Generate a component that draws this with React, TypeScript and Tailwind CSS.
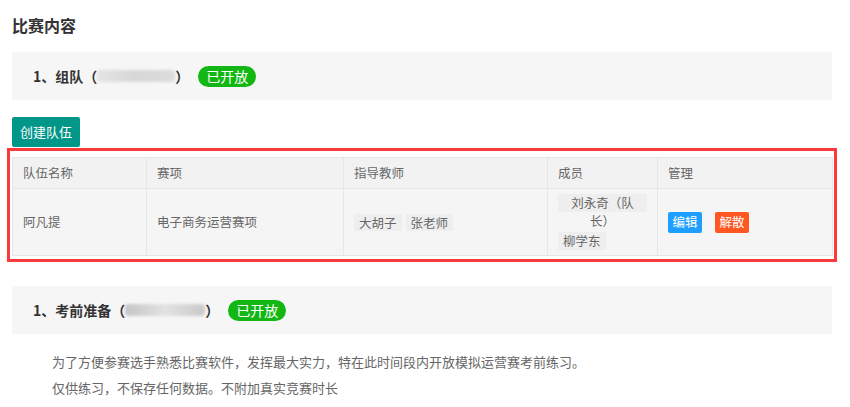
import type { ReactNode } from 'react';

const font = { fontFamily: '"Microsoft YaHei", "Noto Sans CJK SC", "Noto Sans", sans-serif' };

function Blurred({ width, dark }: { width: number; dark?: boolean }) {
  // the dates are blurred in the source screenshot
  return (
    <span
      aria-hidden
      className={
        dark
          ? 'inline-block h-[12px] rounded-sm bg-gradient-to-r from-[#c4c4c4] via-[#e2e2e2] to-[#c9c9c9] blur-[1.5px]'
          : 'inline-block h-[12px] rounded-sm bg-gradient-to-r from-[#e4e4e4] via-[#d7d7d7] to-[#dcdcdc] blur-[1.5px]'
      }
      style={{ width }}
    />
  );
}

function SectionBar({ label, blurWidth, dark }: { label: string; blurWidth: number; dark?: boolean }) {
  return (
    <div className="flex h-[48px] items-center bg-[#f6f6f6] pl-[21px] text-[14px] font-bold text-[#333]">
      <span>{label}（</span>
      <Blurred width={blurWidth} dark={dark} />
      <span>）</span>
      <span className="ml-[9px] flex h-[21px] items-center rounded-full bg-[#13b713] px-[8px] text-[14px] font-normal leading-none text-white">
        已开放
      </span>
    </div>
  );
}

function Tag({ children, className = '' }: { children: ReactNode; className?: string }) {
  return <span className={`inline-block bg-[#eeeeee] px-[5px] text-center ${className}`}>{children}</span>;
}

export default function App() {
  return (
    <div className="min-h-screen bg-white pl-3 pr-[18px] pt-[13px]" style={font}>
      <h2 className="text-[16px] font-bold leading-6 text-[#333]">比赛内容</h2>

      <div className="mt-[15px]">
        <SectionBar label="1、组队" blurWidth={78} />
      </div>

      <button className="mt-[17px] flex h-[30px] w-[68px] items-center justify-center rounded-[2px] bg-[#009688] text-[13px] text-white">
        创建队伍
      </button>

      <div className="relative mt-[10px]">
        {/* red annotation frame over the table */}
        <div className="pointer-events-none absolute -bottom-[6px] -left-[5px] -right-[5px] -top-[9px] border-[3px] border-[#fc3a3a]" />
        <table className="w-full table-fixed border-collapse text-[12.5px] text-[#666]">
          <colgroup>
            <col className="w-[134px]" />
            <col className="w-[197px]" />
            <col className="w-[204px]" />
            <col className="w-[110px]" />
            <col className="w-[175px]" />
          </colgroup>
          <thead>
            <tr className="h-[31px] bg-[#f2f2f2]">
              {['队伍名称', '赛项', '指导教师', '成员', '管理'].map((h) => (
                <th key={h} className="border border-[#e6e6e6] px-[10px] text-left font-normal">
                  {h}
                </th>
              ))}
            </tr>
          </thead>
          <tbody>
            <tr className="bg-[#f5f5f5]">
              <td className="border border-[#e6e6e6] px-[10px]">阿凡提</td>
              <td className="border border-[#e6e6e6] px-[10px]">电子商务运营赛项</td>
              <td className="border border-[#e6e6e6] px-[10px]">
                <div className="flex gap-[4px]">
                  <Tag className="h-[17px] leading-[17px]">大胡子</Tag>
                  <Tag className="h-[17px] leading-[17px]">张老师</Tag>
                </div>
              </td>
              <td className="border border-[#e6e6e6] px-[10px] py-[5px]">
                <div className="flex flex-col items-start">
                  <Tag className="mb-[20px] h-[18px] w-full leading-[18px]">刘永奇（队长）</Tag>
                  <Tag className="h-[18px] leading-[18px]">柳学东</Tag>
                </div>
              </td>
              <td className="border border-[#e6e6e6] px-[10px]">
                <div className="flex gap-[13px]">
                  <button className="flex h-[21px] w-[34px] items-center justify-center rounded-[2px] bg-[#1e9fff] text-[12.5px] text-white">
                    编辑
                  </button>
                  <button className="flex h-[21px] w-[34px] items-center justify-center rounded-[2px] bg-[#ff5722] text-[12.5px] text-white">
                    解散
                  </button>
                </div>
              </td>
            </tr>
          </tbody>
        </table>
      </div>

      <div className="mt-[30px]">
        <SectionBar label="1、考前准备" blurWidth={80} dark />
      </div>

      <div className="mt-[15px] pl-[40px] text-[13px] leading-[26px] text-[#666]">
        <p>为了方便参赛选手熟悉比赛软件，发挥最大实力，特在此时间段内开放模拟运营赛考前练习。</p>
        <p>仅供练习，不保存任何数据。不附加真实竞赛时长</p>
      </div>
    </div>
  );
}
